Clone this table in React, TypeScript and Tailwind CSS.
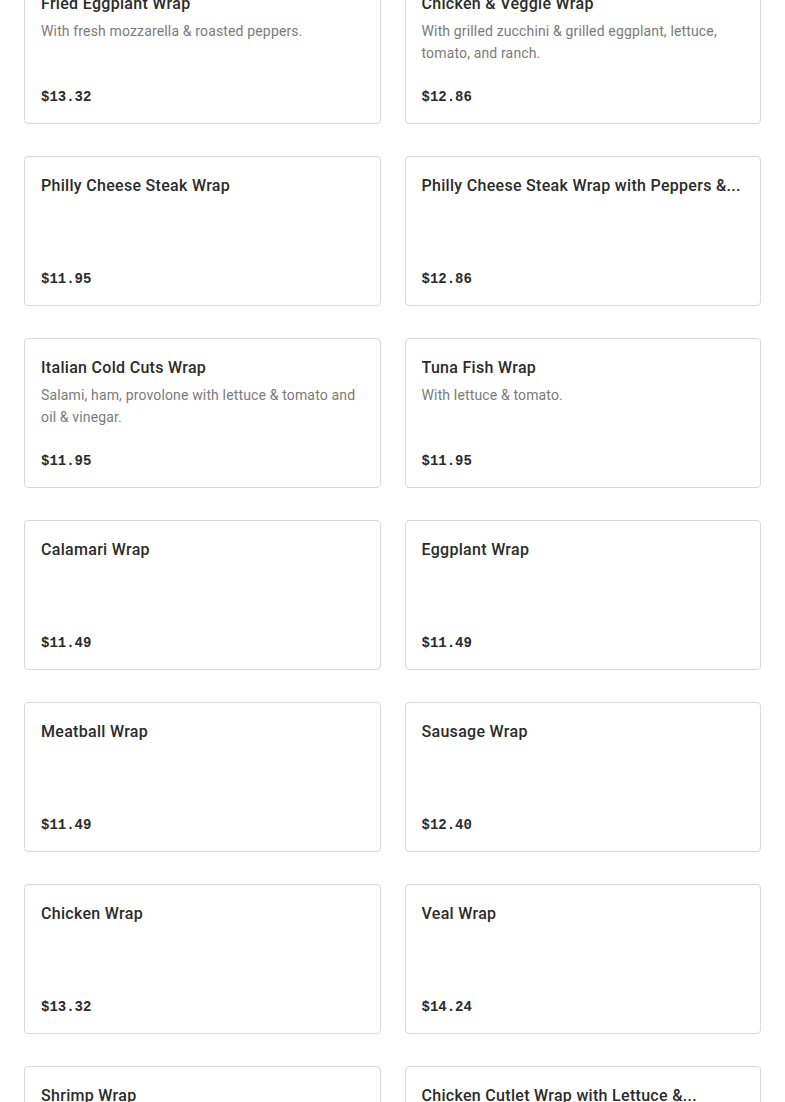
const items = [
  { name: "Fried Eggplant Wrap", desc: "With fresh mozzarella & roasted peppers.", price: "$13.32" },
  { name: "Chicken & Veggie Wrap", desc: "With grilled zucchini & grilled eggplant, lettuce, tomato, and ranch.", price: "$12.86" },
  { name: "Philly Cheese Steak Wrap", desc: "", price: "$11.95" },
  { name: "Philly Cheese Steak Wrap with Peppers &...", desc: "", price: "$12.86" },
  { name: "Italian Cold Cuts Wrap", desc: "Salami, ham, provolone with lettuce & tomato and oil & vinegar.", price: "$11.95" },
  { name: "Tuna Fish Wrap", desc: "With lettuce & tomato.", price: "$11.95" },
  { name: "Calamari Wrap", desc: "", price: "$11.49" },
  { name: "Eggplant Wrap", desc: "", price: "$11.49" },
  { name: "Meatball Wrap", desc: "", price: "$11.49" },
  { name: "Sausage Wrap", desc: "", price: "$12.40" },
  { name: "Chicken Wrap", desc: "", price: "$13.32" },
  { name: "Veal Wrap", desc: "", price: "$14.24" },
  { name: "Shrimp Wrap", desc: "", price: "$14.24" },
  { name: "Chicken Cutlet Wrap with Lettuce &...", desc: "", price: "$13.32" },
];

export default function App() {
  return (
    <div className="min-h-screen bg-white overflow-hidden font-['Roboto',sans-serif]">
      <div className="mt-[-26px] px-6 grid grid-cols-2 gap-x-6 gap-y-8">
        {items.map((item) => (
          <div
            key={item.name}
            className="h-[150px] flex flex-col border border-[#d9d9d9] rounded-[4px] px-4 pt-[17px] pb-[15px] min-w-0"
          >
            <div className="text-[16px] leading-6 font-medium tracking-[0.3px] text-[#2b2b2b] truncate">
              {item.name}
            </div>
            {item.desc && (
              <p className="mt-1 text-[14px] leading-[22px] tracking-[0.15px] text-[#7a7a7a]">{item.desc}</p>
            )}
            <div className="mt-auto text-[14px] leading-[22px] font-bold text-[#2b2b2b] font-['Liberation_Mono',monospace]">
              {item.price}
            </div>
          </div>
        ))}
      </div>
    </div>
  );
}
